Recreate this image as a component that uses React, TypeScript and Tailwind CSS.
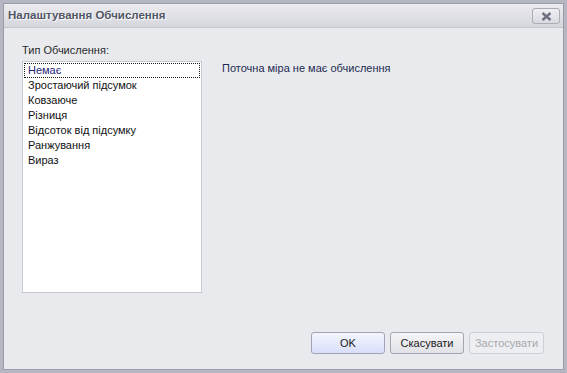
import React from 'react';

const items = ['Немає', 'Зростаючий підсумок', 'Ковзаюче', 'Різниця', 'Відсоток від підсумку', 'Ранжування', 'Вираз'];

const App: React.FC = () => {
  return (
    <div className="w-[567px] h-[373px] bg-[#b4b6c2] p-[3px] font-['Liberation_Sans',Arial,sans-serif] text-[11px] text-[#1e1e1e]">
      <div className="w-full h-full flex flex-col border border-[#9a9ca8] bg-[#dcdde3]">
        {/* Заголовок */}
        <div className="h-[23px] flex items-center justify-between pl-[4px] pr-[3px] bg-gradient-to-b from-[#ebebef] to-[#d6d7dd]">
          <span className="font-bold text-[11.5px] text-[#525664] [text-shadow:1px_1px_1px_#ffffff]">Налаштування Обчислення</span>
          <button className="w-[28px] h-[16px] mt-[1px] rounded-[3px] border border-[#a9abb6] bg-gradient-to-b from-[#f0f0f3] to-[#d9dae0] flex items-center justify-center">
            <svg width="11" height="9" viewBox="0 0 11 9">
              <path d="M1.5 1 L9.5 8 M9.5 1 L1.5 8" stroke="#6e7080" strokeWidth="2.4" />
            </svg>
          </button>
        </div>
        <div className="flex-1 flex flex-col bg-[#e9eaee] border-t border-[#c3c5cd] pt-[16px] pl-[18px] pr-[18px] pb-[15px]">
          <div className="flex flex-1">
            <div className="flex flex-col w-[180px]">
              <div className="h-[17px] leading-[13px] text-[#2a2a2a]">Тип Обчислення:</div>
              <div className="h-[232px] bg-white border border-[#c6c9d1] pt-[1px] px-[1px]">
                {items.map((it, i) => (
                  <div
                    key={it}
                    className={`h-[15px] leading-[13px] pl-[3px] ${i === 0 ? 'border border-dotted border-[#1a1a1a] text-[#1c1c78]' : 'border border-transparent text-[#111111]'}`}
                  >
                    {it}
                  </div>
                ))}
              </div>
            </div>
            <div className="pl-[20px] pt-[16px] text-[#222a4e]">Поточна міра не має обчислення</div>
          </div>
          <div className="flex justify-end gap-[5px] pr-[1px]">
            <button className="w-[74px] h-[22px] rounded-[3px] border border-[#9fa3b8] bg-gradient-to-b from-[#f3f5fd] to-[#d9dffb] text-[#202020]">OK</button>
            <button className="w-[74px] h-[22px] rounded-[3px] border border-[#a3a5b0] bg-gradient-to-b from-[#f5f5f7] to-[#e1e2e7] text-[#202020]">Скасувати</button>
            <button className="w-[75px] h-[22px] rounded-[3px] border border-[#cdcfd6] bg-[#eceef1] text-[#a8a9ad]">Застосувати</button>
          </div>
        </div>
      </div>
    </div>
  );
};

export default App;
